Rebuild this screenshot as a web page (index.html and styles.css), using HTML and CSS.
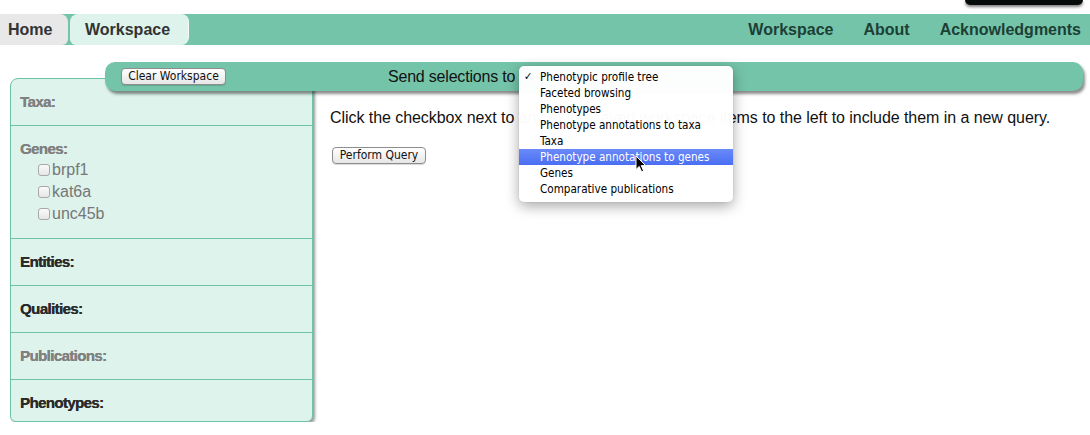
FILE: index.html
```html
<!DOCTYPE html>
<html>
<head>
<meta charset="utf-8">
<link rel="stylesheet" href="styles.css">
</head>
<body>
<div class="corner-tip"></div>
<nav class="topnav">
  <div class="tabs">
    <a class="tab tab-home">Home</a>
    <a class="tab tab-active">Workspace</a>
  </div>
  <div class="navlinks">
    <a>Workspace</a>
    <a>About</a>
    <a>Acknowledgments</a>
  </div>
</nav>

<div class="toolbar">
  <button class="aqua-btn">Clear Workspace</button>
  <span class="send-label">Send selections to</span>
  <div class="menu">
    <div class="menu-item"><span class="check">✓</span>Phenotypic profile tree</div>
    <div class="menu-item">Faceted browsing</div>
    <div class="menu-item">Phenotypes</div>
    <div class="menu-item">Phenotype annotations to taxa</div>
    <div class="menu-item">Taxa</div>
    <div class="menu-item selected">Phenotype annotations to genes</div>
    <div class="menu-item">Genes</div>
    <div class="menu-item">Comparative publications</div>
    <svg class="cursor" width="12" height="18" viewBox="0 0 12 18"><path d="M1 1 L1 14.5 L4.2 11.4 L6.6 16.8 L8.6 15.9 L6.3 10.6 L10.6 10.6 Z" fill="#000" stroke="#fff" stroke-width="1" stroke-linejoin="round"/></svg>
  </div>
</div>

<div class="workarea">
  <aside class="sidebar">
    <section class="group">
      <h3 class="muted">Taxa:</h3>
    </section>
    <section class="group">
      <h3 class="muted">Genes:</h3>
      <ul class="items">
        <li><input type="checkbox" class="cb">brpf1</li>
        <li><input type="checkbox" class="cb">kat6a</li>
        <li><input type="checkbox" class="cb">unc45b</li>
      </ul>
    </section>
    <section class="group">
      <h3>Entities:</h3>
    </section>
    <section class="group">
      <h3>Qualities:</h3>
    </section>
    <section class="group">
      <h3 class="muted">Publications:</h3>
    </section>
    <section class="group last">
      <h3>Phenotypes:</h3>
    </section>
  </aside>
  <main class="main">
    <p class="intro">Click the checkbox next to any of the saved workspace items to the left to include them in a new query.</p>
    <button class="aqua-btn">Perform Query</button>
  </main>
</div>
</body>
</html>
```

FILE: styles.css
```css
* { box-sizing: border-box; }

body {
  margin: 0;
  background: #fff;
  font-family: "Liberation Sans", Arial, sans-serif;
  color: #111;
  position: relative;
}

.corner-tip {
  position: absolute;
  top: 0;
  right: 7px;
  width: 118px;
  height: 5px;
  background: #060b0b;
  border-radius: 0 0 7px 7px;
  box-shadow: 0 2px 3px rgba(0,0,0,0.5);
}

.topnav {
  margin-top: 14px;
  height: 31px;
  background: #74c4aa;
  display: flex;
  justify-content: space-between;
  align-items: stretch;
}

.tabs { display: flex; }

.tab {
  display: flex;
  align-items: center;
  font-size: 16px;
  font-weight: bold;
  color: #333;
  height: 31px;
}

.tab-home {
  background: #e8e8e8;
  padding: 0 15px 0 8px;
  width: 68px;
  border-radius: 0 8px 6px 0;
}

.tab-active {
  background: #ddf3ec;
  margin-left: 2px;
  width: 119px;
  padding: 0 0 0 15px;
  border-radius: 8px 8px 8px 6px;
  border-right: 1px solid #f4fbf8;
}

.navlinks {
  display: flex;
  align-items: center;
  gap: 30px;
  padding-right: 9px;
}

.navlinks a {
  font-size: 16px;
  font-weight: bold;
  color: #1d3f35;
}

.toolbar {
  position: relative;
  z-index: 2;
  margin: 17px 7px 0 105px;
  height: 29px;
  background: #74c4aa;
  border-radius: 10px;
  box-shadow: 2px 3px 3px rgba(0,0,0,0.45);
  display: flex;
  align-items: center;
  padding-left: 16px;
}

.aqua-btn {
  font-family: "DejaVu Sans Condensed", "DejaVu Sans", sans-serif;
  font-size: 12px;
  color: #111;
  height: 17px;
  padding: 0;
  border: 1px solid #8d8d8d;
  border-radius: 4px;
  background: linear-gradient(#ffffff, #f3f3f3 50%, #e6e6e6);
  box-shadow: 0 1px 1px rgba(0,0,0,0.15);
  line-height: 15px;
}

.toolbar .aqua-btn { width: 105px; }

.send-label {
  margin-left: 162px;
  font-size: 16px;
  color: #111;
  letter-spacing: -0.2px;
}

.menu {
  position: absolute;
  left: 414px;
  top: 4px;
  width: 214px;
  height: 136px;
  background: rgba(255,255,255,0.98);
  border-radius: 5px;
  box-shadow: 0 4px 14px rgba(0,0,0,0.35), 0 0 1px rgba(0,0,0,0.3);
  padding-top: 3px;
  font-family: "DejaVu Sans Condensed", "DejaVu Sans", sans-serif;
  font-size: 11.6px;
  color: #000;
}

.menu-item {
  height: 16px;
  line-height: 16px;
  padding-left: 21px;
  position: relative;
  white-space: nowrap;
}

.menu-item .check {
  position: absolute;
  left: 5px;
  top: 0;
  font-size: 11px;
}

.menu-item.selected {
  background: linear-gradient(#6a8af8, #4a6ef2);
  color: #fff;
}

.cursor {
  position: absolute;
  left: 116px;
  top: 89px;
}

.workarea {
  display: flex;
  margin-top: -13px;
  align-items: flex-start;
}

.sidebar {
  margin-left: 10px;
  width: 303px;
  background: #ddf3ec;
  border: 1px solid #6cc4a4;
  border-radius: 8px 3px 6px 6px;
  box-shadow: 2px 2px 3px rgba(0,0,0,0.4);
}

.group {
  padding: 13px 10px 13px 9px;
  border-bottom: 1px solid #6cc4a4;
}

.group.last {
  border-bottom: none;
  padding-bottom: 8px;
}

.group h3 {
  margin: 0;
  font-size: 15px;
  line-height: 20px;
  font-weight: bold;
  letter-spacing: -0.6px;
  color: #2a2a2a;
  text-shadow: 0.3px 0 0 currentColor;
}

.group h3.muted { color: #808080; }

.items {
  list-style: none;
  margin: 0;
  padding: 0 0 0 18px;
}

.items li {
  height: 22px;
  line-height: 22px;
  font-size: 16px;
  color: #777;
  display: flex;
  align-items: center;
}

.cb {
  appearance: none;
  -webkit-appearance: none;
  width: 12px;
  height: 12px;
  margin: 0 2px 0 0;
  border: 1px solid #a8a8a8;
  border-radius: 3px;
  background: linear-gradient(#fafafa, #e6e6e6);
}

.main {
  padding: 30px 0 0 17px;
}

.intro {
  margin: 0 0 18px 0;
  font-size: 16px;
  line-height: 19px;
  color: #111;
  letter-spacing: -0.06px;
}

.main .aqua-btn {
  width: 94px;
  margin-left: 2px;
}
```
